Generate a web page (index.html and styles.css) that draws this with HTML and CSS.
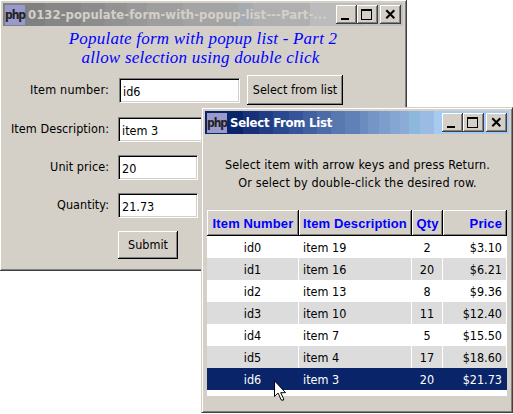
FILE: index.html
```html
<!DOCTYPE html>
<html lang="en">
<head>
<meta charset="utf-8">
<title>Populate form with popup list</title>
<link rel="stylesheet" href="styles.css">
</head>
<body>
<main class="desktop">
  <section class="window main-window">
    <header class="titlebar inactive">
      <span class="logo"><span>php</span></span>
      <h1 class="main-title">0132-populate-form-with-popup-list---Part-...</h1>
      <div class="controls">
        <span class="ctl"><svg viewBox="0 0 21 19"><path d="M5 13h8v2H5z"/></svg></span>
        <span class="ctl"><svg viewBox="0 0 21 19"><path fill-rule="evenodd" d="M4 4h11v11H4zM5 6v8h9V6z"/></svg></span>
        <span class="ctl close"><svg viewBox="0 0 21 19"><path class="cross" d="M6.3 5.3l8 8M14.3 5.3l-8 8"/></svg></span>
      </div>
    </header>
    <div class="heading"><p class="h-one">Populate form with popup list - Part 2</p><p class="h-two">allow selection using double click</p></div>
    <div class="form">
      <div class="field first"><label>Item number:</label><span class="entry wide">id6</span><button class="btn select">Select from list</button></div>
      <div class="field"><label>Item Description:</label><span class="entry wide">item 3</span></div>
      <div class="field"><label>Unit price:</label><span class="entry">20</span></div>
      <div class="field"><label>Quantity:</label><span class="entry">21.73</span></div>
      <div class="field last"><label></label><button class="btn submit">Submit</button></div>
    </div>
  </section>

  <section class="window popup">
    <header class="titlebar active">
      <span class="logo"><span>php</span></span>
      <h1 class="popup-title">Select From List</h1>
      <div class="controls">
        <span class="ctl"><svg viewBox="0 0 21 19"><path d="M5 13h8v2H5z"/></svg></span>
        <span class="ctl"><svg viewBox="0 0 21 19"><path fill-rule="evenodd" d="M4 4h11v11H4zM5 6v8h9V6z"/></svg></span>
        <span class="ctl close"><svg viewBox="0 0 21 19"><path class="cross" d="M6.3 5.3l8 8M14.3 5.3l-8 8"/></svg></span>
      </div>
    </header>
    <div class="hint"><p>Select item with arrow keys and press Return.</p><p>Or select by double-click the desired row.</p></div>
    <div class="list">
      <div class="row head"><span>Item Number</span><span>Item Description</span><span>Qty</span><span>Price</span></div>
      <div class="row"><span>id0</span><span>item 19</span><span>2</span><span>$3.10</span></div>
      <div class="row alt"><span>id1</span><span>item 16</span><span>20</span><span>$6.21</span></div>
      <div class="row"><span>id2</span><span>item 13</span><span>8</span><span>$9.36</span></div>
      <div class="row alt"><span>id3</span><span>item 10</span><span>11</span><span>$12.40</span></div>
      <div class="row"><span>id4</span><span>item 7</span><span>5</span><span>$15.50</span></div>
      <div class="row alt"><span>id5</span><span>item 4</span><span>17</span><span>$18.60</span></div>
      <div class="row selected"><span>id6</span><span>item 3</span><span>20</span><span>$21.73</span></div>
    </div>
  </section>
  <svg class="cursor" viewBox="0 0 12 21"><path fill="#fff" stroke="#000" d="M.5.8v15.7l3.6-3.4 3.2 7h2.2v-1.6l-2.8-5.8h4.9z"/></svg>
</main>
</body>
</html>
```

FILE: styles.css
```css
* { box-sizing: border-box; }
body { margin: 0; background: #fff; overflow: hidden; }
p, h1 { margin: 0; }
.desktop {
  position: relative;
  width: 513px;
  height: 414px;
  font: 12.5px/18px "DejaVu Sans Condensed", "DejaVu Sans", sans-serif;
  color: #000;
  white-space: nowrap;
}
.window {
  position: absolute;
  background: #d4d0c8;
  border: 1px solid;
  border-color: #d4d0c8 #404040 #404040 #d4d0c8;
  box-shadow: inset 1px 1px #fff, inset -1px -1px #808080;
}
.main-window { left: -1px; top: -1px; width: 408px; height: 272px; padding: 3px; }
.popup { left: 201px; top: 107px; width: 312px; height: 306px; padding: 3px; }

.titlebar { display: flex; align-items: center; height: 23px; padding: 0 2px; }
.inactive {
  background: linear-gradient(90deg,
    #808080 0 42px, #868686 0 78px, #8c8c8c 0 102px, #929292 0 124px, #989898 0 144px,
    #9e9e9e 0 180px, #a4a4a4 0 235px, #a6aab2 0 250px, #b0b0b0 0 307px, #bcbcbc 0 360px, #c0c0c0 0);
  color: #d4d0c8;
}
.active {
  background: linear-gradient(90deg,
    #0a246a 0 38px, #16307a 0 54px, #1f3c84 0 68px, #2a488f 0 84px, #35549a 0 98px,
    #4060a0 0 112px, #4c6ca8 0 126px, #5878b0 0 140px, #6080b8 0 155px, #6c8cc0 0 163px,
    #7595c6 0 174px, #7d9dcc 0 185px, #85a5d2 0 195px, #8cacd8 0 204px, #8cb8dc 0 215px,
    #9abce4 0 229px, #a6caf0 0);
  color: #fff;
}
.logo {
  width: 20px; height: 20px; flex: none;
  display: flex; align-items: center; justify-content: center;
  background: #9999cc; color: #222;
  font: bold 12px/18px "DejaVu Sans Condensed", sans-serif;
  letter-spacing: -1.1px;
}
.titlebar h1 { flex: 1; margin-left: 3px; font-size: 13px; font-weight: bold; line-height: 20px; }
.titlebar .main-title { letter-spacing: 0.03px; }
.titlebar .popup-title { letter-spacing: -0.25px; }
.controls { display: flex; }
.ctl {
  width: 21px; height: 19px;
  background: #d4d0c8;
  box-shadow: inset -1px -1px #404040, inset 1px 1px #fff, inset -2px -2px #808080;
}
.ctl svg { display: block; width: 21px; height: 19px; shape-rendering: crispEdges; }
.cross { fill: none; stroke: #000; stroke-width: 2; shape-rendering: auto; }
.close { margin-left: 2px; }

.heading {
  padding-top: 3px;
  text-align: center;
  font: italic 17px/19px "Liberation Serif", serif;
  letter-spacing: 0.22px;
  color: #0000ff;
}
.h-two { margin-right: 5px; }
.form { padding: 8px 0 0 3px; }
.field { display: flex; align-items: center; height: 38px; }
.field.first { height: 30px; margin-bottom: 5px; }
.field.last { height: 36px; margin-top: 3px; }
.field label { width: 103px; margin-right: 9px; text-align: right; letter-spacing: 0.06px; }
.field.first label { margin-right: 10px; letter-spacing: 0.2px; }
.entry {
  width: 80px; height: 25px; padding: 0 3px;
  line-height: 25px;
  background: #fff;
  border: 1px solid;
  border-color: #808080 #fff #fff #808080;
  box-shadow: inset 1px 1px #000, inset -1px -1px #d4d0c8;
}
.entry.wide { width: 121px; }
.btn {
  padding: 0; border: 0; font: inherit; color: inherit;
  background: #d4d0c8;
  box-shadow: inset -1px -1px #000, inset 1px 1px #fff, inset -2px -2px #808080;
}
.select { width: 96px; height: 30px; margin-left: 7px; }
.submit { width: 60px; height: 28px; }

.hint { padding: 22px 0 0 1px; text-align: center; line-height: 18px; letter-spacing: 0.15px; }
.list { width: 300px; height: 186px; margin: 18px 0 0 2px; background: #fff; }
.row { display: grid; grid-template-columns: 92px 113px 31px 64px; height: 22px; font-size: 12.5px; line-height: 22px; }
.row span { height: 22px; padding-top: 1px; text-align: center; border-right: 1px solid #fff; }
.row span:nth-child(2) { text-align: left; padding-left: 4px; }
.row span:nth-child(4) { text-align: right; padding-right: 4px; }
.alt { background: #dcdcdc; }
.row.selected { background: #0a246a; color: #fff; }
.row.selected span { border-color: #0a246a; }
.row.head { height: 26px; font: bold 13px/27px "Liberation Sans", sans-serif; letter-spacing: 0.12px; color: #0000ff; }
.row.head span {
  height: 26px;
  padding-top: 0;
  background: #d4d0c8;
  border: 0;
  box-shadow: inset -1px -1px #000, inset 1px 1px #fff, inset -2px -2px #808080;
}
.row.head span:nth-child(4) { padding-right: 5px; }
.cursor { position: absolute; left: 274px; top: 380px; width: 12px; height: 21px; }
```
